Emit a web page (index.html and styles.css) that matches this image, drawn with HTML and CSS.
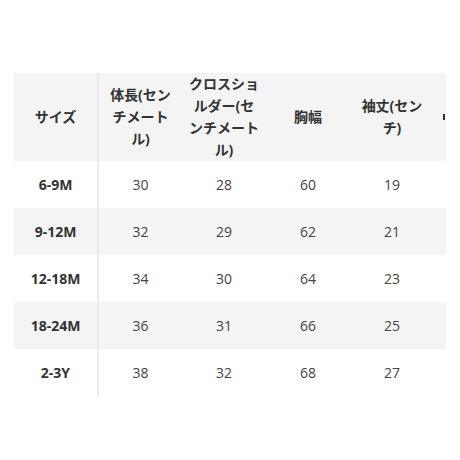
FILE: index.html
```html
<!DOCTYPE html>
<html lang="ja">
<head>
    <meta charset="UTF-8">
    <meta name="viewport" content="width=device-width, initial-scale=1.0">
    <title>サイズ表</title>
    <link rel="stylesheet" href="styles.css">
</head>
<body>
    <div class="size-chart">
        <table class="size-table">
            <thead>
                <tr>
                    <th class="size-col">サイズ</th>
                    <th>体長(センチメートル)</th>
                    <th>クロスショルダー(センチメートル)</th>
                    <th>胸幅</th>
                    <th>袖丈(センチ)</th>
                    <th class="extra-col"><span class="tick"></span></th>
                </tr>
            </thead>
            <tbody>
                <tr>
                    <td class="size-col">6-9M</td>
                    <td>30</td><td>28</td><td>60</td><td>19</td><td class="extra-col"></td>
                </tr>
                <tr>
                    <td class="size-col">9-12M</td>
                    <td>32</td><td>29</td><td>62</td><td>21</td><td class="extra-col"></td>
                </tr>
                <tr>
                    <td class="size-col">12-18M</td>
                    <td>34</td><td>30</td><td>64</td><td>23</td><td class="extra-col"></td>
                </tr>
                <tr>
                    <td class="size-col">18-24M</td>
                    <td>36</td><td>31</td><td>66</td><td>25</td><td class="extra-col"></td>
                </tr>
                <tr>
                    <td class="size-col">2-3Y</td>
                    <td>38</td><td>32</td><td>68</td><td>27</td><td class="extra-col"></td>
                </tr>
            </tbody>
        </table>
    </div>
</body>
</html>
```

FILE: styles.css
```css
body, html {
    margin: 0;
    padding: 0;
    background-color: #ffffff;
    font-family: 'Open Sans', 'Noto Sans CJK JP', sans-serif;
}
body {
    padding: 73px 14px 0 14px;
}
.size-chart {
    width: 432px;
    overflow: hidden;
}
.size-table {
    border-collapse: collapse;
    table-layout: fixed;
    width: 432px;
}
.size-table th,
.size-table td {
    width: 84px;
    padding: 0 6px;
    box-sizing: border-box;
    text-align: center;
    vertical-align: middle;
}
.size-table th {
    height: 88px;
    font-size: 14px;
    line-height: 22px;
    font-weight: bold;
    color: #333;
    background-color: #f4f4f4;
}
.size-table td {
    height: 47px;
    font-size: 14px;
    color: #444;
}
.size-table tbody tr:nth-child(even) td {
    background-color: #f4f4f4;
}
.size-table .size-col {
    border-right: 2px solid #ebebeb;
    font-weight: bold;
    color: #333;
}
.size-table .extra-col {
    width: 12px;
    padding: 0;
    text-align: left;
}
.tick {
    display: block;
    width: 2px;
    height: 6px;
    margin-left: 9px;
    background-color: #333;
}
```
